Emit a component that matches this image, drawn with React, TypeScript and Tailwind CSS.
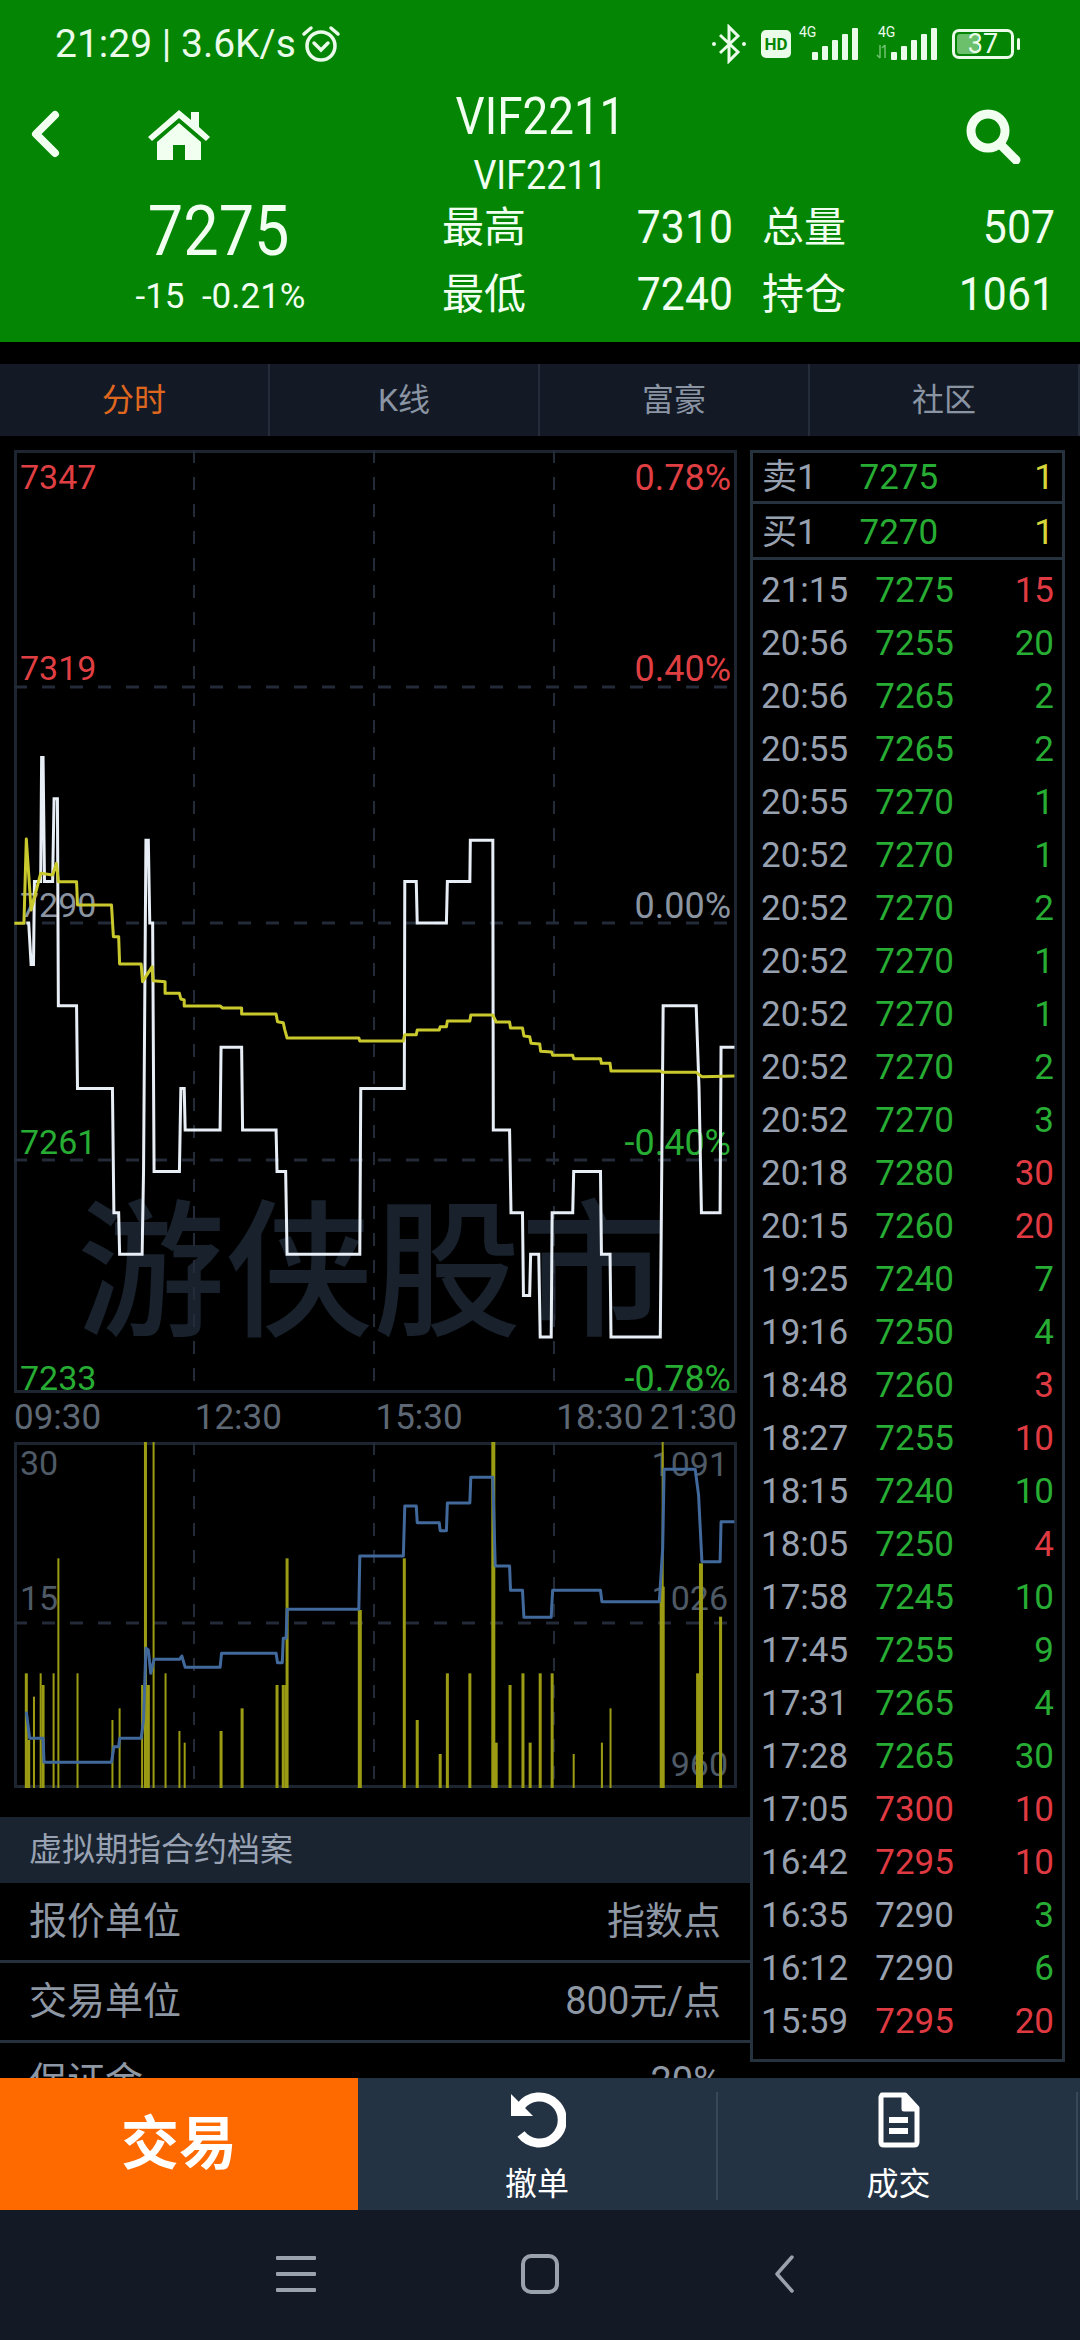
import { Fragment } from "react";

const GREEN = "text-[#27ad33]";
const RED = "text-[#df3a42]";
const GREY = "text-[#98a1b0]";

// trades: time, price, volume, price colour, volume colour
const TRADES: [string, string, string, string, string][] = [
  ["21:15", "7275", "15", GREEN, RED],
  ["20:56", "7255", "20", GREEN, GREEN],
  ["20:56", "7265", "2", GREEN, GREEN],
  ["20:55", "7265", "2", GREEN, GREEN],
  ["20:55", "7270", "1", GREEN, GREEN],
  ["20:52", "7270", "1", GREEN, GREEN],
  ["20:52", "7270", "2", GREEN, GREEN],
  ["20:52", "7270", "1", GREEN, GREEN],
  ["20:52", "7270", "1", GREEN, GREEN],
  ["20:52", "7270", "2", GREEN, GREEN],
  ["20:52", "7270", "3", GREEN, GREEN],
  ["20:18", "7280", "30", GREEN, RED],
  ["20:15", "7260", "20", GREEN, RED],
  ["19:25", "7240", "7", GREEN, GREEN],
  ["19:16", "7250", "4", GREEN, GREEN],
  ["18:48", "7260", "3", GREEN, RED],
  ["18:27", "7255", "10", GREEN, RED],
  ["18:15", "7240", "10", GREEN, GREEN],
  ["18:05", "7250", "4", GREEN, RED],
  ["17:58", "7245", "10", GREEN, GREEN],
  ["17:45", "7255", "9", GREEN, GREEN],
  ["17:31", "7265", "4", GREEN, GREEN],
  ["17:28", "7265", "30", GREEN, GREEN],
  ["17:05", "7300", "10", RED, RED],
  ["16:42", "7295", "10", RED, RED],
  ["16:35", "7290", "3", GREY, GREEN],
  ["16:12", "7290", "6", GREY, GREEN],
  ["15:59", "7295", "20", RED, RED],
];

// chart traces were read off the reference at 2.09x horizontally
const toX = (x: number) => x / 2.09;
const priceY = (p: number) => 923 + (7290 - p) * 8.28;

const PRICE_STEPS: [number, number][] = [
  [55, 7290], [60, 7290], [65, 7285], [70, 7285], [72, 7295], [85, 7295], [87, 7310], [90, 7310], [93, 7295],
  [110, 7295], [113, 7305], [120, 7305], [122, 7280], [160, 7280], [162, 7270], [235, 7270], [238, 7255],
  [248, 7255], [250, 7250], [297, 7250], [300, 7260], [305, 7300], [310, 7300], [313, 7290], [319, 7290],
  [322, 7260], [375, 7260], [378, 7270], [385, 7270], [387, 7265], [460, 7265], [462, 7275], [505, 7275],
  [507, 7265], [577, 7265], [579, 7260], [597, 7260], [600, 7250], [752, 7250], [754, 7270], [845, 7270],
  [846, 7295], [870, 7295], [872, 7290], [933, 7290], [935, 7295], [982, 7295], [983, 7300], [1030, 7300],
  [1031, 7265], [1065, 7265], [1068, 7255], [1092, 7255], [1094, 7245], [1107, 7245], [1109, 7250], [1126, 7250],
  [1129, 7240], [1152, 7240], [1154, 7255], [1197, 7255], [1199, 7260], [1255, 7260], [1257, 7250], [1275, 7250],
  [1277, 7240], [1380, 7240], [1386, 7280], [1455, 7280], [1461, 7270], [1466, 7255], [1505, 7255], [1507, 7275], [1535, 7275],
];

const AVG_LINE: [number, number][] = [
  [30, -20], [50, -20], [55, -273], [65, -60], [85, -170], [110, -165], [118, -200], [122, -145], [160, -145],
  [162, -75], [233, -75], [237, 20], [248, 20], [250, 102], [295, 102], [298, 155], [318, 110], [320, 152],
  [345, 155], [345, 190], [375, 190], [378, 207], [385, 210], [385, 228], [460, 228], [465, 234], [505, 234],
  [505, 252], [577, 252], [580, 275], [592, 278], [595, 298], [600, 324], [750, 324], [752, 333], [843, 333],
  [846, 314], [870, 314], [872, 300], [918, 300], [920, 290], [933, 290], [935, 273], [982, 273], [984, 255],
  [1030, 255], [1037, 276], [1065, 276], [1067, 294], [1092, 294], [1095, 318], [1107, 320], [1110, 340],
  [1128, 342], [1130, 364], [1153, 366], [1155, 376], [1197, 376], [1199, 386], [1255, 386], [1257, 400],
  [1275, 400], [1277, 423], [1380, 423], [1385, 427], [1455, 427], [1467, 440], [1535, 438],
];

const HOLD_LINE: [number, number][] = [
  [55, 875], [62, 955], [90, 955], [92, 1027], [233, 1027], [238, 980], [248, 980], [250, 955], [295, 955],
  [300, 900], [305, 685], [310, 690], [315, 760], [322, 718], [375, 718], [380, 708], [387, 742], [460, 742],
  [463, 700], [577, 700], [580, 728], [590, 728], [592, 655], [598, 655], [600, 568], [750, 568], [752, 408],
  [843, 408], [846, 258], [870, 258], [872, 308], [918, 308], [920, 332], [933, 332], [935, 249], [982, 249],
  [984, 172], [1030, 172], [1035, 438], [1065, 438], [1067, 511], [1092, 511], [1095, 592], [1152, 592],
  [1155, 511], [1255, 511], [1258, 545], [1378, 545], [1385, 385], [1388, 148], [1453, 148], [1460, 225],
  [1467, 425], [1505, 425], [1507, 305], [1535, 305],
];

// x, top, width
const VOL_BARS: [number, number, number][] = [
  [55, 760, 3], [60, 960, 3], [71, 830, 2], [85, 760, 2], [90, 795, 3], [112, 760, 2], [122, 415, 2], [162, 760, 2],
  [235, 900, 2], [250, 865, 2], [297, 795, 2], [304, 65, 3], [310, 795, 3], [321, 65, 2], [346, 760, 2], [375, 933, 2],
  [386, 968, 2], [462, 933, 3], [506, 865, 3], [579, 795, 3], [592, 795, 3], [598, 795, 3], [600, 415, 3], [752, 570, 4],
  [845, 415, 3], [872, 900, 3], [920, 1002, 3], [935, 760, 3], [982, 760, 3], [1031, 65, 4], [1037, 968, 3], [1066, 795, 3],
  [1093, 760, 3], [1108, 968, 3], [1129, 760, 3], [1154, 760, 3], [1199, 1002, 2], [1258, 968, 2], [1276, 865, 2],
  [1385, 65, 2], [1384, 500, 5], [1458, 760, 3], [1465, 430, 4], [1460, 1000, 5], [1506, 590, 3],
];

function Gridlines({ x, top, bottom, mids }: { x: number[]; top: number; bottom: number; mids: number[] }) {
  return (
    <>
      {x.map((v) => (
        <line key={v} x1={v} x2={v} y1={top} y2={bottom} stroke="#222b37" strokeWidth="2" strokeDasharray="13 14" />
      ))}
      {mids.map((v) => (
        <line key={v} x1={14} x2={737} y1={v} y2={v} stroke="#222b37" strokeWidth="3" strokeDasharray="13 15" />
      ))}
    </>
  );
}

function PriceChart() {
  const white = PRICE_STEPS.map(([x, p]) => `${toX(x)},${priceY(p)}`).join(" ");
  const avg = AVG_LINE.map(([x, y]) => `${toX(x)},${930 + y / 3}`).join(" ");
  return (
    <div className="relative h-[943px] border-[3px] border-[#1c2530] text-[34px] font-normal leading-none">
      <div className="absolute left-[60px] top-[733px] font-['Noto_Sans_CJK_SC',sans-serif] text-[148px] font-medium leading-[148px] text-[#18212c]">
        游侠股市
      </div>
      <span className="absolute left-[3px] top-[7px] text-[#df3f42]">7347</span>
      <span className="absolute right-[3px] top-[7px] text-[36px] text-[#df3f42]">0.78%</span>
      <span className="absolute left-[3px] top-[198px] text-[#df3f42]">7319</span>
      <span className="absolute right-[3px] top-[198px] text-[36px] text-[#df3f42]">0.40%</span>
      <span className="absolute left-[3px] top-[435px] text-[#8b95a1]">7290</span>
      <span className="absolute right-[3px] top-[435px] text-[36px] text-[#8b95a1]">0.00%</span>
      <span className="absolute left-[3px] top-[672px] text-[#27ad33]">7261</span>
      <span className="absolute right-[3px] top-[672px] text-[36px] text-[#27ad33]">-0.40%</span>
      <span className="absolute left-[3px] top-[908px] text-[#27ad33]">7233</span>
      <span className="absolute right-[3px] top-[908px] text-[36px] text-[#27ad33]">-0.78%</span>
      <svg className="absolute -left-[3px] -top-[3px]" width="723" height="943" viewBox="14 450 723 943" fill="none">
        <Gridlines x={[194, 374, 554]} top={450} bottom={1393} mids={[687, 923, 1160]} />
        <polyline points={white} stroke="#e8eef6" strokeWidth="3" strokeLinejoin="miter" />
        <polyline points={avg} stroke="#c9c92e" strokeWidth="3" strokeLinejoin="round" />
      </svg>
    </div>
  );
}

function VolumeChart() {
  const hold = HOLD_LINE.map(([x, y]) => `${toX(x)},${1420 + y / 3}`).join(" ");
  return (
    <div className="relative h-[346px] border-[3px] border-[#1c2530] text-[34px] font-normal leading-none text-[#4f5a67]">
      <span className="absolute left-[3px] top-[1px]">30</span>
      <span className="absolute left-[3px] top-[136px]">15</span>
      <span className="absolute right-[6px] top-[2px]">1091</span>
      <span className="absolute right-[6px] top-[136px]">1026</span>
      <span className="absolute right-[6px] top-[302px]">960</span>
      <svg className="absolute -left-[3px] -top-[3px]" width="723" height="346" viewBox="14 1442 723 346" fill="none">
        <Gridlines x={[194, 374, 554]} top={1442} bottom={1788} mids={[1623]} />
        {VOL_BARS.map(([x, top, w], i) => (
          <rect key={i} x={toX(x) - w / 2} y={1420 + top / 3} width={w} height={1788 - (1420 + top / 3)} fill="#9c9c14" />
        ))}
        <polyline points={hold} stroke="#41699c" strokeWidth="3" strokeLinejoin="round" />
      </svg>
    </div>
  );
}

function InfoRow({ label, value }: { label: string; value: string }) {
  return (
    <div className="flex h-[80px] shrink-0 items-center justify-between border-b-[3px] border-[#27313d] pl-[29px] pr-[29px] font-normal">
      <span>{label}</span>
      <span>{value}</span>
    </div>
  );
}

function TradeRow({ a, b, c, ac, bc, cc }: { a: string; b: string; c: string; ac: string; bc: string; cc: string }) {
  return (
    <div className="flex items-center">
      <span className={`shrink-0 ${ac}`}>{a}</span>
      <span className={`flex-1 text-center ${bc}`}>{b}</span>
      <span className={`w-[73px] shrink-0 text-right ${cc}`}>{c}</span>
    </div>
  );
}

function Signal({ arrows }: { arrows?: boolean }) {
  return (
    <div className="relative h-[32px] w-[62px]">
      <span className="absolute left-[2px] -top-[3px] text-[14px] font-normal leading-none">4G</span>
      <svg className="absolute left-0 top-0" width="62" height="32" viewBox="0 0 62 32" fill="#eafbea">
        {arrows && <path d="M4 17v13M1 27l3 3M9 30V17M6 20l3-3" stroke="#6fc06f" strokeWidth="1.5" fill="none" />}
        <rect x="15" y="24" width="6" height="8" rx="1" />
        <rect x="25" y="18" width="6" height="14" rx="1" />
        <rect x="35" y="12" width="6" height="20" rx="1" />
        <rect x="45" y="6" width="6" height="26" rx="1" />
        <rect x="55" y="0" width="6" height="32" rx="1" />
      </svg>
    </div>
  );
}

function StatusBar() {
  return (
    <div className="flex h-[86px] items-center justify-between pl-[55px] pr-[66px] pt-[2px] text-[#eafbea]">
      <div className="flex items-center gap-[5px] text-[39px] font-normal leading-none">
        <span>21:29 | 3.6K/s</span>
        <svg width="40" height="38" viewBox="0 0 40 38" fill="none" stroke="currentColor" strokeWidth="3.5">
          <circle cx="20" cy="21" r="14" />
          <path d="M13 18l7 7 7-7M3 9l7-6M37 9l-7-6" strokeLinecap="round" />
        </svg>
      </div>
      <div className="flex items-center">
        <svg width="36" height="40" viewBox="0 0 36 40" fill="none" stroke="currentColor" strokeWidth="3">
          <path d="M9 11l18 17-9 9V3l9 9-18 17" />
          <circle cx="3" cy="20" r="2" fill="currentColor" stroke="none" />
          <circle cx="33" cy="20" r="2" fill="currentColor" stroke="none" />
        </svg>
        <div className="ml-[14px] flex h-[28px] w-[30px] items-center justify-center rounded-[5px] bg-[#eafbea] text-[17px] font-bold leading-none text-[#048504]">
          HD
        </div>
        <div className="ml-[6px]"><Signal /></div>
        <div className="ml-[17px]"><Signal arrows /></div>
        <div className="relative ml-[14px] flex h-[30px] w-[62px] items-center justify-center rounded-[7px] border-[3px] border-[#eafbea] text-[27px] font-normal leading-none">
          <div className="absolute inset-[2px] w-[21px] rounded-[3px] bg-[#6cc06c]" />
          <span className="relative">37</span>
          <div className="absolute -right-[9px] top-[6px] h-[12px] w-[3px] rounded-full bg-[#eafbea]" />
        </div>
      </div>
    </div>
  );
}

function Header() {
  return (
    <header className="h-[342px] shrink-0 bg-[#048504] text-[#f0fff0]">
      <StatusBar />
      <div className="relative flex h-[112px] justify-between pl-[30px] pr-[59px]">
        <div className="flex items-start gap-[88px] pt-[24px]">
          <svg width="30" height="48" viewBox="0 0 30 48" fill="none" stroke="currentColor" strokeWidth="8" strokeLinecap="round" strokeLinejoin="round">
            <path d="M25 5L6 24l19 19" />
          </svg>
          <svg width="62" height="50" viewBox="0 0 62 50" fill="currentColor">
            <path d="M31 0L0 27l4 4L31 8l27 23 4-4-11-10V2h-8v8z" />
            <path d="M31 13L9 32v18h16V35h12v15h16V32z" />
          </svg>
        </div>
        <div className="absolute left-0 right-0 top-[5px] flex flex-col items-center text-center font-normal leading-none">
          <span className="scale-x-[0.88] text-[52px] leading-[52px]">VIF2211</span>
          <span className="mt-[13px] scale-x-[0.9] text-[40px] leading-[40px]">VIF2211</span>
        </div>
        <svg className="mt-[22px]" width="56" height="56" viewBox="0 0 56 56" fill="none" stroke="currentColor" strokeWidth="9" strokeLinecap="round">
          <circle cx="23" cy="23" r="17" />
          <path d="M36 37l15 15" />
        </svg>
      </div>
      <div className="flex items-start">
        <div className="flex w-[438px] flex-col items-center font-normal">
          <span className="-mt-[2px] scale-x-[0.9] text-[70px] leading-[70px]">7275</span>
          <span className="mt-[12px] pl-[3px] text-[35px] leading-[38px]">-15&nbsp;&nbsp;-0.21%</span>
        </div>
        <div className="-mt-[4px] grid w-[617px] grid-cols-[88px_207px_113px_1fr] font-normal">
          {[
            ["最高", "7310", "总量", "507"],
            ["最低", "7240", "持仓", "1061"],
          ].map((r) => (
            <Fragment key={r[0]}>
              <span className="h-[67px] pl-[4px] text-[42px] leading-[67px] whitespace-nowrap">{r[0]}</span>
              <span className="h-[67px] origin-right scale-x-[0.93] text-right text-[46px] leading-[67px]">{r[1]}</span>
              <span className="h-[67px] pl-[29px] text-[42px] leading-[67px] whitespace-nowrap">{r[2]}</span>
              <span className="h-[67px] origin-right scale-x-[0.93] text-right text-[46px] leading-[67px]">{r[3]}</span>
            </Fragment>
          ))}
        </div>
      </div>
    </header>
  );
}

function Tabs() {
  const tabs = ["分时", "K线", "富豪", "社区"];
  return (
    <div className="mt-[22px] grid h-[72px] shrink-0 grid-cols-4 bg-[#131a26] text-[32px] font-normal text-[#8a94a3]">
      {tabs.map((t, i) => (
        <div key={t} className={`flex items-center justify-center border-r-2 border-[#232c38] ${i === 0 ? "text-[#e0681e]" : ""}`}>
          {t}
        </div>
      ))}
    </div>
  );
}

function Sidebar() {
  return (
    <aside className="mt-[14px] h-[1612px] w-[315px] shrink-0 border-[3px] border-[#27323f] text-[35px] font-normal leading-none">
      <div className="flex h-[51px] flex-col justify-center border-b-[3px] border-[#27323f] pl-[9px] pr-[8px]">
        <TradeRow a="卖1" b="7275" c="1" ac={GREY} bc={GREEN} cc="text-[#d6d63a]" />
      </div>
      <div className="flex h-[56px] flex-col justify-center border-b-[3px] border-[#27323f] pl-[9px] pr-[8px] pt-[4px]">
        <TradeRow a="买1" b="7270" c="1" ac={GREY} bc={GREEN} cc="text-[#d6d63a]" />
      </div>
      <div className="grid auto-rows-[53px] items-center pl-[8px] pr-[8px] pt-[4px]">
        {TRADES.map((r, i) => (
          <TradeRow key={i} a={r[0]} b={r[1]} c={r[2]} ac={GREY} bc={r[3]} cc={r[4]} />
        ))}
      </div>
    </aside>
  );
}

function BottomBar() {
  return (
    <div className="grid h-[132px] shrink-0 grid-cols-[358px_360px_360px_1fr] bg-[#243344] text-white">
      <div className="flex items-center justify-center bg-[#ff6a00] text-[58px] font-bold">交易</div>
      <div className="mt-[14px] mb-[10px] flex flex-col items-center justify-between border-r-2 border-[#3a4757] text-[32px] leading-none">
        <svg width="58" height="56" viewBox="0 0 58 56" fill="none">
          <path d="M13 14A23 23 0 1 1 13 42" stroke="white" strokeWidth="9" />
          <path d="M3 2l0 22 22 0z" fill="white" />
        </svg>
        <span className="font-normal">撤单</span>
      </div>
      <div className="mt-[14px] mb-[10px] flex flex-col items-center justify-between border-r-2 border-[#3a4757] pl-[3px] text-[32px] leading-none">
        <svg width="42" height="56" viewBox="0 0 42 56" fill="none" stroke="white" strokeWidth="5" strokeLinejoin="round">
          <path d="M4 3h23l12 13v34q0 3-3 3H6q-3 0-3-3V5z" />
          <path d="M26 3v14h13" fill="white" />
          <path d="M11 28h19M11 39h19" strokeWidth="6" />
        </svg>
        <span className="font-normal">成交</span>
      </div>
      <div />
    </div>
  );
}

function NavBar() {
  return (
    <div className="grid h-[130px] shrink-0 grid-cols-[244px_244px_244px] items-center justify-center justify-items-center bg-[#131a26] pb-[2px]">
      <svg width="40" height="36" viewBox="0 0 40 36" fill="#9aa2ad">
        <rect y="0" width="40" height="4" rx="1" />
        <rect y="16" width="40" height="4" rx="1" />
        <rect y="32" width="40" height="4" rx="1" />
      </svg>
      <svg width="38" height="40" viewBox="0 0 38 40" fill="none" stroke="#9aa2ad" strokeWidth="4">
        <rect x="2" y="2" width="34" height="36" rx="8" />
      </svg>
      <svg width="20" height="38" viewBox="0 0 20 38" fill="none" stroke="#9aa2ad" strokeWidth="3.5" strokeLinecap="round" strokeLinejoin="round">
        <path d="M18 2L3 19l15 17" />
      </svg>
    </div>
  );
}

export default function App() {
  return (
    <div className="flex h-[2340px] w-[1080px] flex-col overflow-hidden bg-black font-['Roboto','Noto_Sans_CJK_SC',sans-serif] font-light">
      <Header />
      <Tabs />
      <main className="flex min-h-0 flex-1 overflow-hidden">
        <div className="flex w-[750px] shrink-0 flex-col">
          <div className="shrink-0 pl-[14px] pr-[13px] pt-[14px]">
            <PriceChart />
            <div className="grid h-[49px] grid-cols-4 items-center text-[35px] font-normal leading-none text-[#5e6875]">
              <span>09:30</span>
              <span>12:30</span>
              <span>15:30</span>
              <div className="flex justify-between">
                <span>18:30</span>
                <span>21:30</span>
              </div>
            </div>
            <VolumeChart />
          </div>
          <div className="mt-[29px] flex h-[66px] shrink-0 items-center bg-[#1a2430] pl-[29px] text-[33px] font-normal text-[#98a2b3]">
            虚拟期指合约档案
          </div>
          <div className="text-[38px] text-[#8e97a4]">
            <InfoRow label="报价单位" value="指数点" />
            <InfoRow label="交易单位" value="800元/点" />
            <InfoRow label="保证金" value="20%" />
          </div>
        </div>
        <Sidebar />
      </main>
      <BottomBar />
      <NavBar />
    </div>
  );
}
